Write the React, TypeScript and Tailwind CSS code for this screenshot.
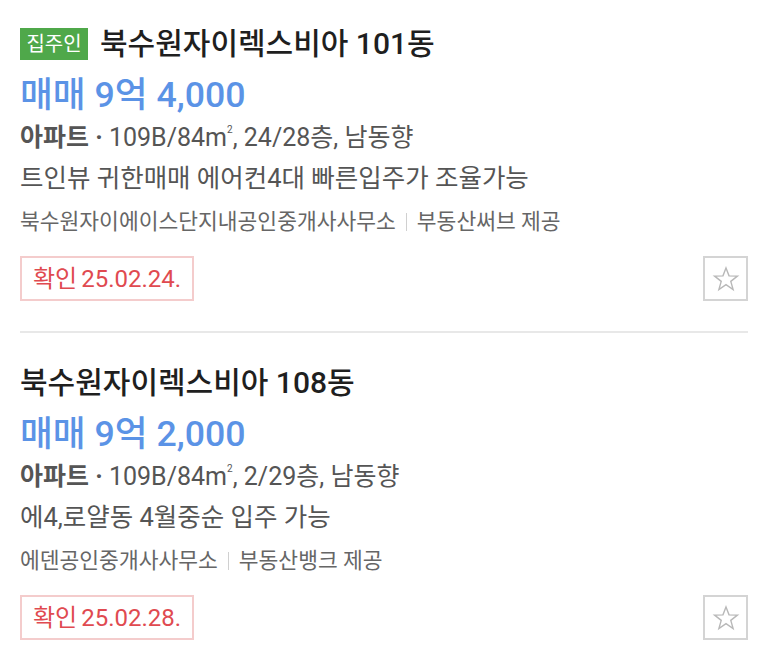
import React from "react";

const FONT = { fontFamily: 'Roboto, "Noto Sans CJK KR", sans-serif' };

function StarButton() {
  return (
    <button className="flex h-[45px] w-[45px] items-center justify-center border-2 border-[#d4d4d4] bg-white">
      <svg width="28" height="28" viewBox="0 0 24 24" fill="none" stroke="#b8b8b8" strokeWidth="1.2" strokeLinejoin="miter">
        <polygon points="12,2.5 14.6,9.3 21.8,9.5 16.1,14 18.1,21 12,16.9 5.9,21 7.9,14 2.2,9.5 9.4,9.3" />
      </svg>
    </button>
  );
}

type Item = {
  badge?: string;
  title: string;
  price: string;
  floor: string;
  desc: string;
  agency: string;
  provider: string;
  date: string;
};

const items: Item[] = [
  {
    badge: "집주인",
    title: "북수원자이렉스비아 101동",
    price: "매매 9억 4,000",
    floor: ", 24/28층, 남동향",
    desc: "트인뷰 귀한매매 에어컨4대 빠른입주가 조율가능",
    agency: "북수원자이에이스단지내공인중개사사무소",
    provider: "부동산써브 제공",
    date: "25.02.24.",
  },
  {
    title: "북수원자이렉스비아 108동",
    price: "매매 9억 2,000",
    floor: ", 2/29층, 남동향",
    desc: "에4,로얄동 4월중순 입주 가능",
    agency: "에덴공인중개사사무소",
    provider: "부동산뱅크 제공",
    date: "25.02.28.",
  },
];

function Card({ item, first }: { item: Item; first: boolean }) {
  return (
    <div className={first ? "pt-[28px] pb-[30px]" : "pt-[34px] pb-[28px]"}>
      <div className="flex h-[32px] items-center">
        {item.badge && (
          <span className="mr-[12px] flex h-[32px] w-[68px] items-center justify-center bg-[#4fa84a] text-[20px] leading-none text-white">
            {item.badge}
          </span>
        )}
        <span className="text-[30px] font-medium leading-none text-[#1f1f1f]">{item.title}</span>
      </div>
      <div className="mt-[15px] h-[40px] text-[35.7px] font-medium leading-[40px] text-[#5b93e6]">{item.price}</div>
      <div className="mt-[3px] h-[40px] text-[25px] leading-[40px] text-[#555]">
        <span className="font-bold">아파트 ·</span>
        {" 109B/84m"}
        <sup className="relative top-[12px] align-top text-[10px]">2</sup>
        {item.floor}
      </div>
      <div className="h-[40px] text-[25.5px] leading-[40px] text-[#555]">{item.desc}</div>
      <div className="mt-[10px] flex h-[28px] items-center text-[21.5px] leading-[28px] text-[#666]">
        <span>{item.agency}</span>
        <span className="mx-[10px] h-[18px] w-[1px] bg-[#d0d0d0]" />
        <span>{item.provider}</span>
      </div>
      <div className="mt-[20px] flex items-center justify-between">
        <div className="flex h-[45px] items-center border-2 border-[#f4cccc] px-[11px] text-[24px] text-[#e04a50]">
          <span>확인</span>
          <span className="ml-[4px]">{item.date}</span>
        </div>
        <StarButton />
      </div>
    </div>
  );
}

export default function App() {
  return (
    <div className="min-h-[668px] w-[762px] bg-white px-[20px]" style={FONT}>
      <div className="w-[728px]">
        <Card item={items[0]} first />
        <div className="h-[2px] bg-[#e8e8e8]" />
        <Card item={items[1]} first={false} />
      </div>
    </div>
  );
}
